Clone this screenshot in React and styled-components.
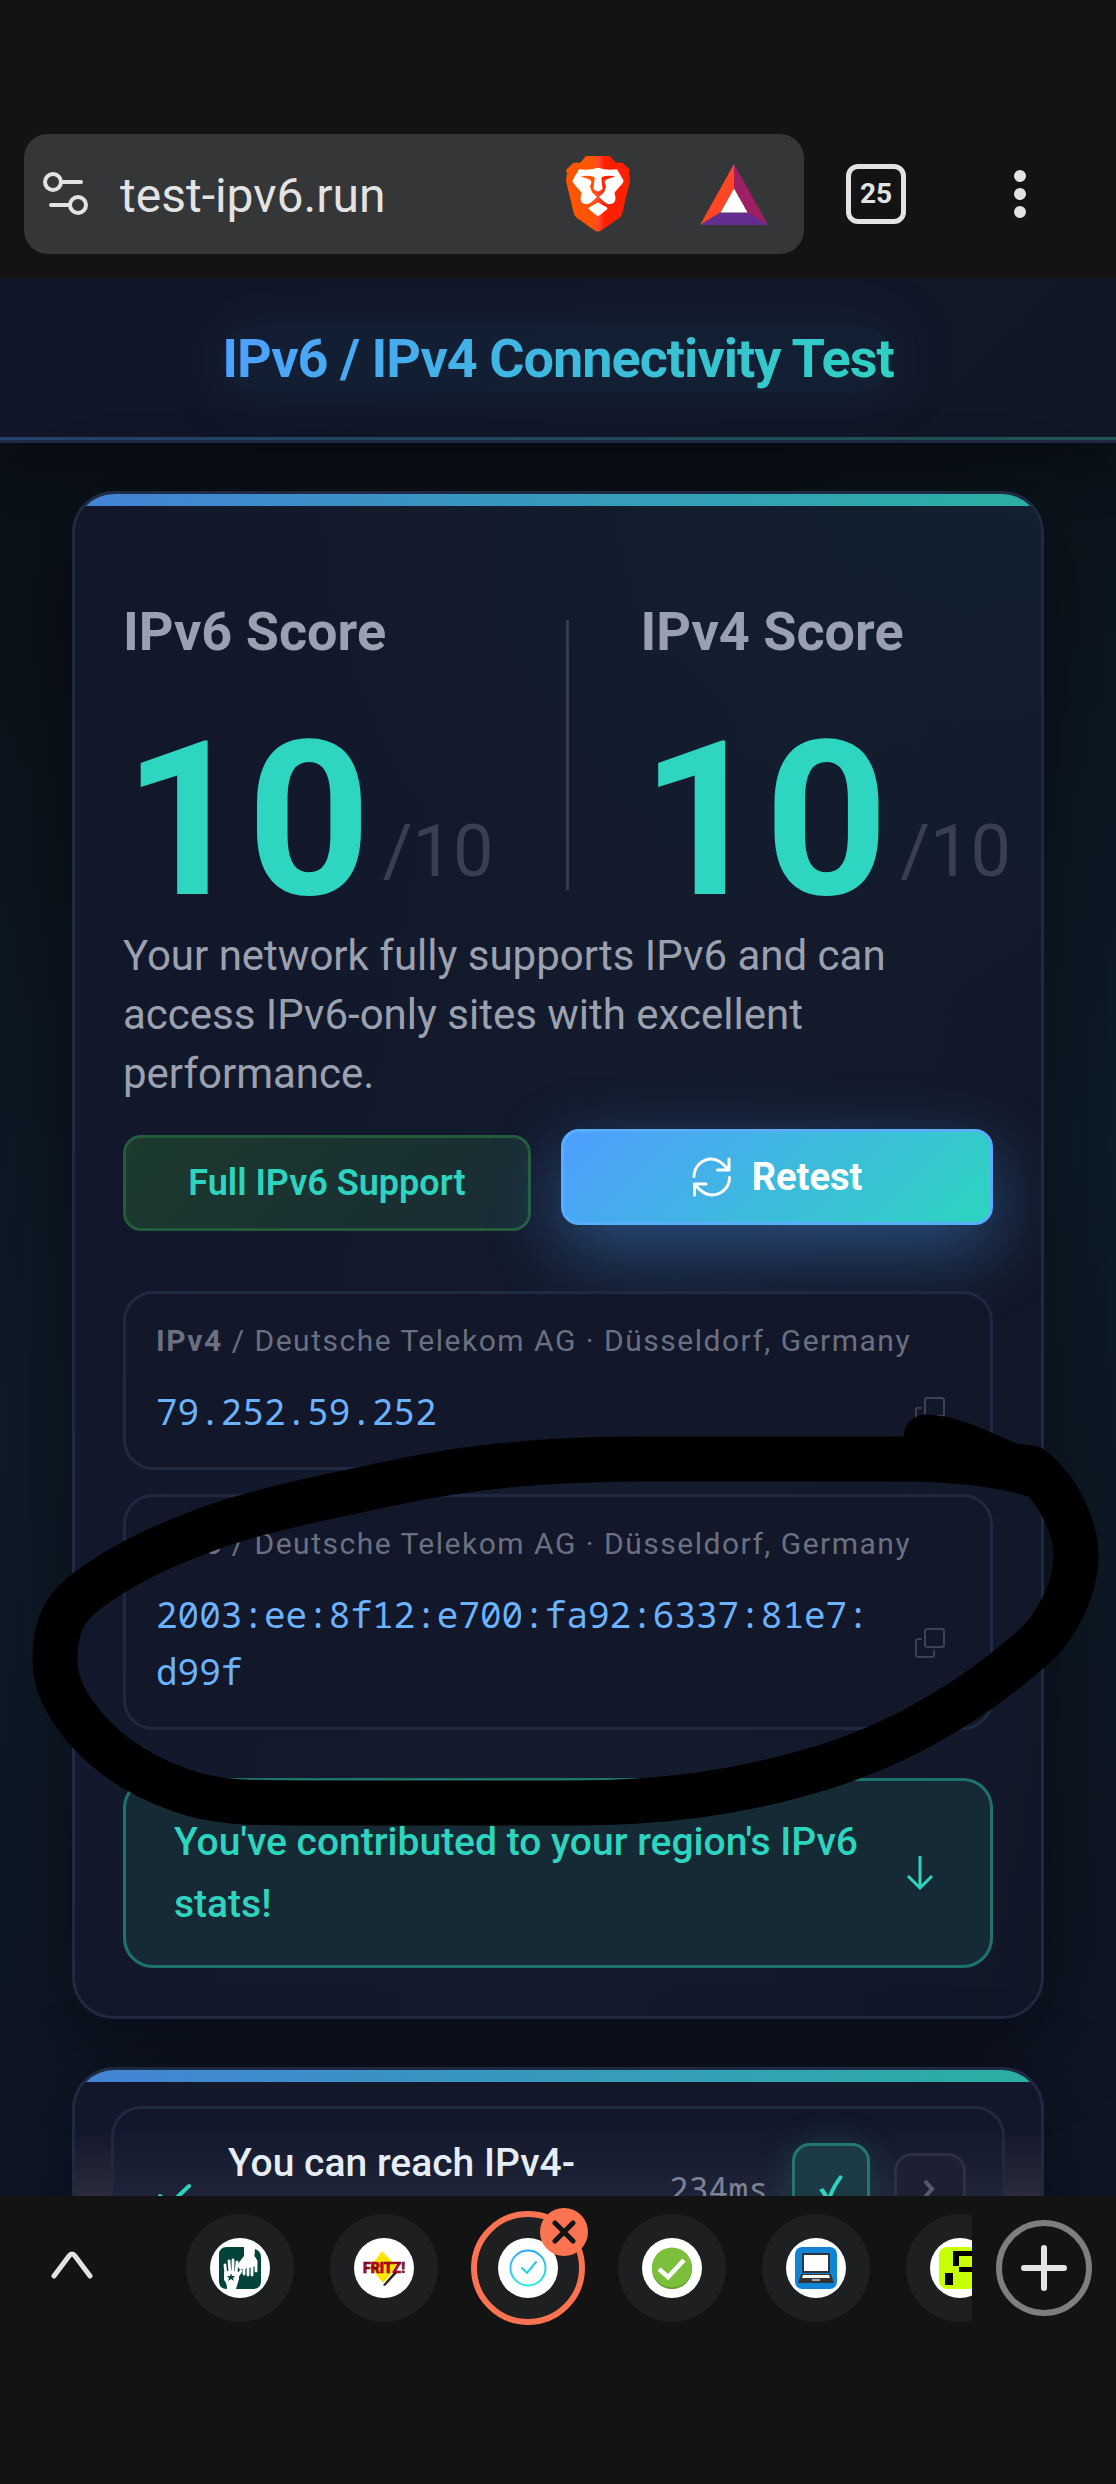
import React from 'react'
import styled, {createGlobalStyle} from 'styled-components'

const GlobalStyle = createGlobalStyle`
  * {
    box-sizing: border-box;
  }

  body {
    margin: 0;
    background: #131313;
    font-family: Roboto, 'Noto Sans', sans-serif;
  }

  button, input {
    font-family: inherit;
  }
`

const Screen = styled.div`
  position: relative;
  display: flex;
  flex-direction: column;
  height: 100vh;
  overflow: hidden;
`

const PlainButton = styled.button`
  appearance: none;
  display: flex;
  align-items: center;
  justify-content: center;
  flex: none;
  margin: 0;
  padding: 0;
  border: none;
  background: transparent;
  color: inherit;
  cursor: pointer;
`

// Browser toolbar

const Toolbar = styled.header`
  display: flex;
  align-items: center;
  flex: none;
  padding: 134px 24px 24px;
  background: #131313;
  color: #e3e3e3;
`

const AddressBar = styled.div`
  display: flex;
  align-items: center;
  flex: 1;
  min-width: 0;
  height: 120px;
  padding: 0 36px 0 18px;
  border-radius: 24px;
  background: #353637;
`

const Address = styled.input`
  flex: 1;
  min-width: 0;
  margin-left: 30px;
  padding: 4px 0 0;
  border: none;
  outline: none;
  background: transparent;
  color: #e3e3e3;
  font-size: 48px;
  line-height: 60px;
`

const AddressActions = styled.div`
  display: flex;
  align-items: center;
  gap: 70px;
`

const TabCount = styled(PlainButton)`
  width: 60px;
  height: 60px;
  margin-left: 42px;
  border: 5px solid #e3e3e3;
  border-radius: 12px;
  font-size: 28px;
  font-weight: 700;
  line-height: 32px;
`

const MenuButton = styled(PlainButton)`
  width: 84px;
  height: 96px;
  margin-left: 72px;
  margin-right: 30px;
`

// Page

const Viewport = styled.div`
  flex: 1;
  min-height: 0;
  overflow-y: auto;
  scrollbar-width: none;
  background:
    radial-gradient(ellipse 700px 800px at 100% 45%, #0d1c29 0%, transparent 100%),
    radial-gradient(ellipse 500px 800px at 0% 60%, #0e1b29 0%, transparent 100%),
    linear-gradient(#0b1219 0%, #0b141d 50%, #0f1626 100%);
`

const PageHeader = styled.div`
  position: relative;
  padding: 48px;
  border-bottom: 3px solid #1f2942;
  background: linear-gradient(135deg, #111629, #121829 60%, #111725);
  box-shadow: 0 12px 60px rgba(0, 0, 0, 0.4);
  text-align: center;

  &::after {
    content: '';
    position: absolute;
    left: 0;
    right: 0;
    bottom: 0;
    height: 3px;
    background: linear-gradient(90deg, #24426e, #1f5552);
  }
`

const TitleGlow = styled.div`
  display: inline-block;
  vertical-align: top;
  border-radius: 48px;
  background: rgba(24, 52, 84, 0.25);
  box-shadow: 0 0 48px 12px rgba(24, 52, 84, 0.25);
`

const Title = styled.h1`
  display: inline-block;
  margin: 0;
  background: linear-gradient(135deg, #4f9eff, #2dd4bf);
  background-clip: text;
  color: transparent;
  font-size: 54px;
  font-weight: 700;
  line-height: 66px;
  letter-spacing: -1px;
  vertical-align: top;
`

const Main = styled.main`
  display: flex;
  flex-direction: column;
  gap: 48px;
  padding: 48px 72px;
`

const Card = styled.section`
  position: relative;
  padding: ${({$compact}) => $compact ? '36px' : '48px'};
  border: 3px solid #1f2942;
  border-radius: 42px;
  background: ${({$compact}) => $compact
    ? 'linear-gradient(#12172a 0, #12172a 60px, #2b2c3b 128px)'
    : `radial-gradient(ellipse 800px 500px at 100% 0%, #12202f 0%, transparent 100%),
       linear-gradient(100deg, #12172a 0%, #131b2d 60%, #111727 100%)`};
  box-shadow: 0 24px 96px rgba(0, 0, 0, 0.45);
  overflow: hidden;

  &::before {
    content: '';
    position: absolute;
    top: 0;
    left: 0;
    right: 0;
    height: 12px;
    background: linear-gradient(90deg, #4384d6, #2aafa3);
  }
`

const Scores = styled.div`
  display: flex;
  align-items: center;
  gap: 72px;
  margin-top: 42px;
`

const ScoreDivider = styled.div`
  flex: none;
  width: 3px;
  height: 270px;
  background: #353d4d;
`

const Score = styled.div`
  flex: none;
`

const ScoreLabel = styled.h2`
  margin: 0 0 36px;
  color: #99a1b0;
  font-size: 54px;
  font-weight: 700;
  line-height: 96px;
`

const ScoreValue = styled.div`
  display: flex;
  align-items: flex-end;
  gap: 12px;
  color: #2ed6c2;
  font-size: 216px;
  font-weight: 700;
  line-height: 210px;
`

const ScoreTotal = styled.span`
  padding-bottom: 32px;
  color: #373f50;
  font-size: 72px;
  font-weight: 400;
  line-height: 84px;
`

const Description = styled.p`
  margin: 0;
  color: #9ba1af;
  font-size: 42px;
  line-height: 59px;
`

const Actions = styled.div`
  display: grid;
  grid-template-columns: 17fr 18fr;
  gap: 30px;
  margin-top: 32px;
`

const SupportBadge = styled.div`
  display: flex;
  align-items: center;
  justify-content: center;
  height: 96px;
  border: 3px solid #245c3b;
  border-radius: 18px;
  background: linear-gradient(135deg, #1c3a2d, #182b35);
  color: #2dd4bf;
  font-size: 36px;
  font-weight: 600;
`

const RetestButton = styled(PlainButton)`
  gap: 21px;
  height: 96px;
  border: 3px solid #58aefb;
  border-radius: 18px;
  background: linear-gradient(135deg, #4f9eff, #2dd4bf);
  box-shadow: 0 24px 72px rgba(79, 158, 255, 0.4);
  color: #fff;
  font-size: 38px;
  font-weight: 700;
  transform: translateY(-6px);
`

const AddressList = styled.div`
  position: relative;
  display: flex;
  flex-direction: column;
  gap: 24px;
  margin: 60px 0 48px;
`

const AddressCard = styled.div`
  padding: 24px 30px 27px;
  border: 3px solid #1f2942;
  border-radius: 30px;
  background: #12172a;
`

const AddressLabel = styled.div`
  color: #6a7080;
  font-size: 30px;
  line-height: 45px;
  letter-spacing: 0.05em;
`

const AddressRow = styled.div`
  display: flex;
  align-items: center;
  gap: 24px;
  margin-top: 20px;
`

const AddressValue = styled.div`
  flex: 1;
  color: #6cb3ff;
  font-family: 'Droid Sans Mono', 'Noto Sans Mono', 'Liberation Mono', monospace;
  font-size: 36px;
  line-height: 57px;
  word-break: break-all;
`

const CopyButton = styled(PlainButton)`
  width: 60px;
  height: 48px;
  color: #3d4252;
`

const Banner = styled.a`
  display: flex;
  align-items: center;
  gap: 24px;
  padding: 30px 48px;
  border: 3px solid #1f7269;
  border-radius: 30px;
  background: #162a35;
  color: #2dd4bf;
  font-size: 39px;
  font-weight: 500;
  line-height: 62px;
  text-decoration: none;
`

const BannerText = styled.span`
  flex: 1;
`

const TestRow = styled.div`
  display: flex;
  align-items: center;
  gap: 24px;
  padding: 28px 36px;
  border: 3px solid #1f2942;
  border-radius: 30px;
  background: linear-gradient(#12172a 0, #12172a 12px, #20243a 90px);
`

const TestResult = styled.div`
  display: flex;
  align-items: center;
  justify-content: center;
  flex: none;
  width: 48px;
  color: #2dd4bf;
`

const TestName = styled.div`
  flex: 1;
  margin-left: 6px;
  color: #e6edf5;
  font-size: 39px;
  font-weight: 500;
  line-height: 52px;
`

const TestTime = styled.div`
  color: #7d8393;
  font-family: 'Droid Sans Mono', 'Noto Sans Mono', 'Liberation Mono', monospace;
  font-size: 33px;
  line-height: 48px;
`

const TestStatus = styled.div`
  display: flex;
  align-items: center;
  justify-content: center;
  width: 78px;
  height: 92px;
  border: 3px solid #23776f;
  border-radius: 18px;
  background: #1c3a44;
  box-shadow: 0 0 36px rgba(45, 212, 191, 0.16);
  color: #2dd4bf;
`

const ExpandButton = styled(PlainButton)`
  width: 72px;
  height: 72px;
  border: 3px solid #2d3143;
  border-radius: 18px;
  background: #1c2032;
  color: #555a69;
`

// Bottom tab strip

const BottomBar = styled.footer`
  display: flex;
  align-items: center;
  flex: none;
  height: 288px;
  padding-bottom: 144px;
  background: #131313;
  color: #e3e3e3;
`

const EdgeButton = styled(PlainButton)`
  width: 144px;
  height: 144px;
`

const TabStrip = styled.nav`
  display: flex;
  flex: 1;
  min-width: 0;
  margin-left: 24px;
  overflow: hidden;
`

const TabSlot = styled.div`
  position: relative;
  display: flex;
  align-items: center;
  justify-content: center;
  flex: none;
  width: 144px;
  height: 144px;
`

const Tab = styled(PlainButton)`
  width: ${({$active}) => $active ? '114px' : '108px'};
  height: ${({$active}) => $active ? '114px' : '108px'};
  border: ${({$active}) => $active ? '6px solid #fb7350' : 'none'};
  border-radius: 50%;
  background: #1e1f20;
`

const Favicon = styled.span`
  display: flex;
  align-items: center;
  justify-content: center;
  width: 60px;
  height: 60px;
  border-radius: 50%;
  background: #fff;
  overflow: hidden;
`

const CloseTab = styled(PlainButton)`
  position: absolute;
  top: 12px;
  right: 12px;
  width: 48px;
  height: 48px;
  border-radius: 50%;
  background: #fb7350;
  color: #131313;
`

const AddTab = styled.span`
  display: flex;
  align-items: center;
  justify-content: center;
  width: 96px;
  height: 96px;
  border: 6px solid #7e7e7e;
  border-radius: 50%;
`

const Marker = styled.svg`
  position: absolute;
  top: 1400px;
  left: 0;
  width: 100%;
  pointer-events: none;
`

const TuneIcon = () => (
  <svg width="48" height="48" viewBox="0 0 48 48" fill="none" stroke="currentColor" strokeWidth="4" strokeLinecap="round">
    <circle cx="11" cy="12" r="8" />
    <path d="M21 12h18M9 35h17" />
    <circle cx="36" cy="35" r="8" />
  </svg>
)

const LionIcon = () => (
  <svg width="64" height="76" viewBox="0 0 64 76">
    <defs>
      <linearGradient id="lion" gradientUnits="userSpaceOnUse" x1="0" x2="64" y1="0" y2="0">
        <stop offset="0" stopColor="#ff5500" />
        <stop offset="0.42" stopColor="#ff5500" />
        <stop offset="0.5" stopColor="#ff4a30" />
        <stop offset="0.6" stopColor="#ff2000" />
        <stop offset="1" stopColor="#ff2000" />
      </linearGradient>
    </defs>
    <path fill="url(#lion)" d="M20 0h24l6 7q4-1 7 0l7 7-1 3 1 8-7 29q-1 6-4 8L36 74q-4 3-8 0L11 62q-3-2-4-8L0 25l1-8-1-3 7-7q3-1 7 0z" />
    {/* brow and cheeks, then the eyes and nose cut back in */}
    <path fill="#fff" d="M13 13.300q10 1.500 19-1.600 9 3.100 19 1.600l6.300 10.700q.5 1.500-.5 3L49 36q-1 1.500 0 3 1.500 5-1.500 8-4.500 2.500-8.500-.5L33 41h-2l-6 5.500q-4 3-8.500.5-3-3-1.500-8 1-1.500 0-3L7.200 27q-1-1.500-.5-3z" />
    <path fill="url(#lion)" d="M14.500 20.700q7-1.700 13 0 1.500.5 1.200 1.800l-1.200 10q0 1.200 4.500 3 4.500-1.800 4.500-3l-1.200-10q-.3-1.300 1.200-1.800 6-1.700 13 0-6 .8-9.500 3l-1.500 2 1.500 5-2 5.500L33 41l1.500 4h-5l1.500-4-5-4.800-2-5.500 1.500-5-1.500-2q-3.500-2.200-9.500-3z" />
    <path fill="#fff" d="M32 46.500l9 5q.8.800 0 1.700l-7.300 6q-1.700 1.300-3.400 0l-7.300-6q-.8-.9 0-1.700z" />
  </svg>
)

const TriangleIcon = () => (
  <svg width="68" height="61" viewBox="0 0 68 61">
    <path fill="#ff4724" d="M34 0v24.500l-13.500 24L0 61z" />
    <path fill="#9e1f63" d="M34 0v24.500l13.500 24L68 61z" />
    <path fill="#662d91" d="M0 61l20.500-12.500h27L68 61z" />
    <path fill="#fff" d="M34 24.500l13.500 24h-27z" />
  </svg>
)

const DotsIcon = () => (
  <svg width="12" height="48" viewBox="0 0 12 48" fill="currentColor">
    <circle cx="6" cy="6" r="6" />
    <circle cx="6" cy="24" r="6" />
    <circle cx="6" cy="42" r="6" />
  </svg>
)

const RefreshIcon = () => (
  <svg width="39" height="40" viewBox="0 0 39 40" fill="none" stroke="currentColor" strokeWidth="3" strokeLinecap="round" strokeLinejoin="round">
    <path d="M2 19.500C2 10 9.500 2 19.500 2 26 2 31 6 36.500 13M37 2v11H25.500" />
    <path d="M37.500 20.500C37.500 30 30 38 20 38 13 38 8 34 2.500 27M2.500 38V27H14" />
  </svg>
)

const CopyIcon = () => (
  <svg width="30" height="30" viewBox="0 0 30 30" fill="none" stroke="currentColor" strokeWidth="2" strokeLinejoin="round" strokeLinecap="round">
    <rect x="10" y="1" width="19" height="18" rx="2" />
    <path d="M6 11H3q-2 0-2 2v14q0 2 2 2h14q2 0 2-2v-4" />
  </svg>
)

const ArrowIcon = () => (
  <svg width="45" height="45" viewBox="0 0 45 45" fill="none" stroke="currentColor" strokeWidth="3">
    <path d="M23 5v32M11 25l12 12 12-12" />
  </svg>
)

const CheckIcon = () => (
  <svg width="36" height="36" viewBox="0 0 36 36" fill="none" stroke="currentColor" strokeWidth="4" strokeLinecap="round" strokeLinejoin="round">
    <path d="M33 15L14 33 4 25" />
  </svg>
)

const StatusCheck = () => (
  <svg width="28" height="34" viewBox="0 0 28 34" fill="currentColor">
    <path d="M23 3l3 2C20 13 16 21 13 30H9C7 25 5 21 2 18l4-2c2 2 4 5 5 8C14 16 18 9 23 3z" />
  </svg>
)

const ChevronUp = () => (
  <svg width="42" height="34" viewBox="0 0 42 34" fill="none" stroke="currentColor" strokeWidth="5" strokeLinecap="round" strokeLinejoin="round">
    <path d="M3 25L18 5q3-4 6 0l15 20" />
  </svg>
)

const ChevronRight = () => (
  <svg width="14" height="24" viewBox="0 0 14 24" fill="none" stroke="currentColor" strokeWidth="4">
    <path d="M2 4l7 8-7 8" />
  </svg>
)

const HandsFavicon = () => (
  <svg width="42" height="42" viewBox="0 0 42 42">
    <path fill="#044339" d="M8 0h17v9l-7 9 3 5q3-2 4-1l-6 20H8q-8 0-8-8V8q0-8 8-8z" />
    <path fill="#044339" d="M36 2q6 2 6 8v24q0 8-8 8H18l4-16 13-12z" />
    <g fill="none" stroke="#fff" strokeWidth="2.800" strokeLinecap="round">
      <path d="M6 18l1 10M10 14l1 12M14 13v12M18 15l-1 12M22 24l-4 6" />
      <path d="M25 18v9M29 18v10M33 18v10M37 14v10M22 17l-1 3" />
    </g>
    <path fill="#fff" d="M5 25q7-3 15 0v7l-3 10H8q0-6-3-9z" />
    <path fill="#fff" d="M26 0h9v9q4 3 3 9-7 5-14 1-3 0-3-2l5-6z" />
    <path fill="#044339" d="M12 26l1 3h3l-2 2 1 3-3-2-3 2 1-3-2-2h3z" />
  </svg>
)

const FritzFavicon = () => (
  <svg width="42" height="42" viewBox="0 0 42 42">
    <path fill="#222" d="M20 38l13-15 1 3-12 13z" />
    <path fill="#ffe600" d="M19 4l15 16-14 16L7 20z" />
    <text x="21" y="26" textAnchor="middle" fontFamily="Roboto, sans-serif" fontWeight="900" fontSize="14" fill="#e2001a" stroke="#4d0710" strokeWidth="0.600">FRITZ!</text>
  </svg>
)

const RingFavicon = () => (
  <svg width="38" height="38" viewBox="0 0 38 38" fill="none" stroke="url(#ring)" strokeWidth="2" strokeLinecap="round">
    <defs>
      <linearGradient id="ring" gradientUnits="userSpaceOnUse" x1="0" x2="0" y1="0" y2="38">
        <stop offset="0" stopColor="#2fa4ff" />
        <stop offset="1" stopColor="#22f0e8" />
      </linearGradient>
    </defs>
    <circle cx="19" cy="19" r="17.500" />
    <path d="M13 19l5 5 9-11" />
  </svg>
)

const GreenFavicon = () => (
  <svg width="42" height="42" viewBox="0 0 42 42" fill="none">
    <circle cx="21" cy="22" r="20" fill="#5a9c2b" />
    <circle cx="21" cy="20.500" r="20" fill="#7cbf3a" />
    <path d="M8 22l9 8 16-17" stroke="#fff" strokeWidth="4.500" />
  </svg>
)

const LaptopFavicon = () => (
  <svg width="42" height="42" viewBox="0 0 42 42">
    <rect width="42" height="42" rx="7" fill="#1184d8" />
    <path fill="#333" d="M7 6h28v20H7zM6 27h30l3 9H3z" />
    <path fill="#fff" d="M9 8h24v16H9zM8 28h26l1 3H7z" />
    <path fill="#aaa" d="M17 32h8v2h-8z" />
  </svg>
)

const LimeFavicon = () => (
  <svg width="42" height="42" viewBox="0 0 42 42">
    <rect width="42" height="42" rx="8" fill="#c8ff00" />
    <path d="M14 4h22v5H20v10h-6zM20 20h13v5H20zM6 26h8v12H6z" />
  </svg>
)

const TABS = [
  {id: 'hands', label: 'Community tab', icon: HandsFavicon},
  {id: 'fritz', label: 'Router tab', icon: FritzFavicon},
  {id: 'ipv6', label: 'Connectivity test tab', icon: RingFavicon, active: true},
  {id: 'status', label: 'Status tab', icon: GreenFavicon},
  {id: 'laptop', label: 'Computer tab', icon: LaptopFavicon},
  {id: 'lime', label: 'Network tab', icon: LimeFavicon}
]

const ADDRESSES = [
  {type: 'IPv4', value: '79.252.59.252'},
  {type: 'IPv6', value: '2003:ee:8f12:e700:fa92:6337:81e7:d99f'}
]

const ScoreBlock = ({label, value}) => (
  <Score>
    <ScoreLabel>{label}</ScoreLabel>
    <ScoreValue>
      <span>{value}</span>
      <ScoreTotal>/10</ScoreTotal>
    </ScoreValue>
  </Score>
)

const App = () => {
  return (
    <Screen>
      <GlobalStyle />
      <Toolbar>
        <AddressBar>
          <PlainButton aria-label="Site settings"><TuneIcon /></PlainButton>
          <Address aria-label="Address" defaultValue="test-ipv6.run" />
          <AddressActions>
            <PlainButton aria-label="Shields"><LionIcon /></PlainButton>
            <PlainButton aria-label="Rewards"><TriangleIcon /></PlainButton>
          </AddressActions>
        </AddressBar>
        <TabCount aria-label="Open tabs">25</TabCount>
        <MenuButton aria-label="Menu"><DotsIcon /></MenuButton>
      </Toolbar>

      <Viewport>
        <PageHeader>
          <TitleGlow>
            <Title>IPv6 / IPv4 Connectivity Test</Title>
          </TitleGlow>
        </PageHeader>
        <Main>
          <Card>
            <Scores>
              <ScoreBlock label="IPv6 Score" value="10" />
              <ScoreDivider />
              <ScoreBlock label="IPv4 Score" value="10" />
            </Scores>
            <Description>
              Your network fully supports IPv6 and can access IPv6-only sites with excellent performance.
            </Description>
            <Actions>
              <SupportBadge>Full IPv6 Support</SupportBadge>
              <RetestButton><RefreshIcon />Retest</RetestButton>
            </Actions>
            <AddressList>
              {ADDRESSES.map(({type, value}) => (
                <AddressCard key={type}>
                  <AddressLabel>
                    <b>{type}</b> / Deutsche Telekom AG · Düsseldorf, Germany
                  </AddressLabel>
                  <AddressRow>
                    <AddressValue>{value}</AddressValue>
                    <CopyButton aria-label={`Copy ${type} address`}><CopyIcon /></CopyButton>
                  </AddressRow>
                </AddressCard>
              ))}
            </AddressList>
            <Banner href="#stats">
              <BannerText>You've contributed to your region's IPv6 stats!</BannerText>
              <ArrowIcon />
            </Banner>
          </Card>

          <Card $compact>
            <TestRow>
              <TestResult><CheckIcon /></TestResult>
              <TestName>You can reach IPv4-only websites</TestName>
              <TestTime>234ms</TestTime>
              <TestStatus><StatusCheck /></TestStatus>
              <ExpandButton aria-label="Show details"><ChevronRight /></ExpandButton>
            </TestRow>
          </Card>
        </Main>
      </Viewport>

      <BottomBar>
        <EdgeButton aria-label="Expand tab group"><ChevronUp /></EdgeButton>
        <TabStrip aria-label="Tabs">
          {TABS.map(({id, label, icon: Icon, active}) => (
            <TabSlot key={id}>
              <Tab $active={active} aria-label={label}>
                <Favicon><Icon /></Favicon>
              </Tab>
              {active && (
                <CloseTab aria-label="Close tab">
                  <svg width="24" height="24" viewBox="0 0 24 24" fill="none" stroke="currentColor" strokeWidth="5" strokeLinecap="round">
                    <path d="M3 3l18 18M21 3L3 21" />
                  </svg>
                </CloseTab>
              )}
            </TabSlot>
          ))}
        </TabStrip>
        <EdgeButton aria-label="New tab">
          <AddTab>
            <svg width="48" height="48" viewBox="0 0 48 48" fill="none" stroke="currentColor" strokeWidth="6" strokeLinecap="round">
              <path d="M24 4v40M4 24h40" />
            </svg>
          </AddTab>
        </EdgeButton>
      </BottomBar>

      <Marker viewBox="0 1400 1116 440" fill="none" stroke="#000" strokeWidth="45" strokeLinecap="round" strokeLinejoin="round" aria-hidden="true">
        <path d="M926 1437C955 1438 985 1455 1012 1466L1031 1468C1060 1490 1076 1530 1076 1555C1076 1590 1055 1630 1030 1650C990 1685 955 1708 910 1732C870 1752 835 1765 800 1774C740 1791 670 1803 570 1803L306 1803C250 1803 215 1803 180 1790C140 1776 110 1755 89 1732C66 1706 55 1684 55 1660C55 1622 66 1604 98 1583C130 1561 165 1545 200 1532C250 1512 330 1496 407 1480C460 1469 530 1459 640 1459L903 1459C960 1459 1005 1466 1031 1474" />
      </Marker>
    </Screen>
  )
}

export default App
